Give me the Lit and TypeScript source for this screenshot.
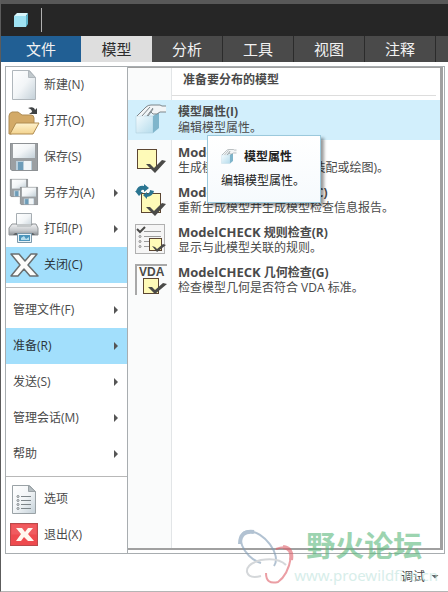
import { LitElement, html, css, svg, nothing, TemplateResult } from "lit";
import { customElement, property } from "lit/decorators.js";
import { classMap } from "lit/directives/class-map.js";

const check = (x: number, y: number) => svg`
  <path d="M${x} ${y + 4} l4 0 4 4 8 -8 4 1 -11 12z" fill="#4a4a48"/>`;

const note = (x: number, y: number, w: number) => svg`
  <rect x=${x} y=${y} width=${w} height=${w} fill="#fefab8" stroke="#5c4632"/>`;

const floppy = svg`
  <path d="M0 0h28v28H2L0 26z" fill="#9b9fa2"/>
  <path d="M3 0h22v15H3z" fill="url(#paper)"/>
  <path d="M6 18h16v10H6z" fill="#b9cedb"/>
  <path d="M8 19h5v8H8z" fill="#6d9cb8"/>
  <path d="M14 18h7v10h-7z" fill="#f1f5f7"/>
  <path d="M.5 .5h27v27H2L.5 26z" fill="none" stroke="#8d9194"/>`;

const paperDefs = svg`
  <defs>
    <linearGradient id="paper" x1="0" y1="0" x2="1" y2="1">
      <stop offset="0" stop-color="#ffffff"/>
      <stop offset="0.5" stop-color="#f2f5f7"/>
      <stop offset="1" stop-color="#c3d0d8"/>
    </linearGradient>
    <linearGradient id="flap" x1="0" y1="0" x2="0" y2="1">
      <stop offset="0" stop-color="#fff3cf"/>
      <stop offset="1" stop-color="#f3d38e"/>
    </linearGradient>
    <linearGradient id="metal" x1="0" y1="0" x2="0" y2="1">
      <stop offset="0" stop-color="#f1f2f3"/>
      <stop offset="0.6" stop-color="#c4c7ca"/>
      <stop offset="1" stop-color="#8b8f93"/>
    </linearGradient>
    <linearGradient id="face" x1="0" y1="0" x2="1" y2="1">
      <stop offset="0" stop-color="#f4fbfe"/>
      <stop offset="1" stop-color="#b5dcec"/>
    </linearGradient>
  </defs>`;

const hand = svg`
  <path d="M1 12l6-4h17v4z" fill="#e6f5fb"/>
  <path d="M1 12h17v17H1z" fill="url(#face)" stroke="#a9cbd9" stroke-width=".5"/>
  <path d="M18 12l6-4v16l-6 5z" fill="#7fb5cb"/>
  <path d="M2 12L11 3q2-2 5-2h9l2 1h4v6h-6l-3 2h-4l-2-2-3 4-2-1 2-4-5 6-2-1 4-5-5 5z" fill="#f3f5f6"/>
  <path d="M2 12L11 3q2-2 5-2h9l2 1h4M31 8h-6l-3 2h-4l-2-2 2-3M15 3l-8 9M18 4l-6 8M16 8l-3 4" fill="none" stroke="#7d868b"/>`;

const icons: Record<string, TemplateResult> = {
  fresh: svg`
    <path d="M4.500 1.500h17l6 7v22h-23z" fill="url(#paper)" stroke="#b0b7bc"/>
    <path d="M20.500 1.500v7h7z" fill="#c1c9cd" stroke="#b0b7bc"/>`,
  open: svg`
    <path d="M1 29V11q0-3 3-4h6l4 3h9q3 0 3 3v6L3 29z" fill="#d3aa68" stroke="#b08d55"/>
    <path d="M2 29l6-11h23l-6 11z" fill="url(#flap)" stroke="#b08c50"/>
    <path d="M20 3q6-2 7 2l2-2v6h-8l3-2q0-3-4-4z" fill="#3f4244"/>`,
  save: svg`<g transform="translate(2 2)">${floppy}</g>`,
  saveAs: svg`
    <g transform="translate(2 2) scale(.64)">${floppy}</g>
    <g transform="translate(12 10) scale(.64)">${floppy}</g>`,
  print: svg`
    <path d="M8.500 .5h15v14h-15z" fill="url(#paper)" stroke="#a6adb2"/>
    <path d="M4 11h5v1h15v-1h4l2 4v7H1v-7z" fill="url(#metal)" stroke="#909497"/>
    <path d="M9 11h14v3H9z" fill="#c4c8ca"/>
    <path d="M7 20h18l2 2H5z" fill="#606467"/>
    <path d="M9.500 20.500h14v9h-14z" fill="#e8f3f8" stroke="#7b98aa"/>
    <path d="M11 22h11v6H11z" fill="#4b94bb"/>
    <path d="M13 25l3-2 2 3 3-2v3h-8z" fill="#b5dceb"/>`,
  close: svg`
    <path d="M3 5h8l6 7 6-7h6l-9 11 10 11h-8l-6-7-6 7H3l9-11z" fill="#fdfdfb" stroke="#6a6f70" stroke-width="1.500" stroke-linejoin="round"/>`,
  options: svg`
    <path d="M4.500 2.500h17l6 6v22h-23z" fill="url(#paper)" stroke="#9aa2a6"/>
    <path d="M20.500 2.500v6h7z" fill="#b5bdc1" stroke="#9aa2a6"/>
    <path d="M13 13.500h10M13 17.500h10M13 21.500h10M13 25.500h10" stroke="#7e868a"/>
    <g fill="#fff" stroke="#7a8286"><circle cx="10" cy="13.500" r="1"/><circle cx="10" cy="17.500" r="1"/><circle cx="10" cy="21.500" r="1"/><circle cx="10" cy="25.500" r="1"/></g>`,
  exit: svg`
    <rect x="2.500" y="4.500" width="27" height="22" fill="#ee4a4e" stroke="#b94a4c"/>
    <rect x="3.500" y="5.500" width="25" height="10" fill="#f1686a" opacity=".6"/>
    <path d="M8 9h6l3 4 3-4h5l-5 6 6 7h-6l-4-4-3 4H8l5-7z" fill="#fff7ef"/>`,
  properties: hand,
  interactive: svg`${note(2.5, 5.5, 19)}${check(11, 16)}`,
  regenerate: svg`
    ${note(6.5, 9.5, 19)}${check(11, 19)}
    <path d="M1 7q2-6 8-5V0l5 4-5 4V6Q6 5 6 8l2 0-4 4-4-5z" fill="#2a7591"/>
    <path d="M8 11l4-3v2q3-1 3-4l4 1q-1 5-7 6v2z" fill="#2a7591"/>`,
  rules: svg`
    <rect x=".5" y=".5" width="29" height="29" fill="#f5f5f5" stroke="#b0b0b0"/>
    <path d="M2 5l3 3 5-5" fill="none" stroke="#4a4a48" stroke-width="2"/>
    <path d="M9 7.500h17M9 12.500h17M9 17.500h5M9 22.500h5" stroke="#9a9a9a"/>
    <g fill="none" stroke="#8a8a8a"><circle cx="5" cy="12.500" r="1"/><circle cx="5" cy="17.500" r="1"/><circle cx="5" cy="22.500" r="1"/></g>
    ${note(14.5, 14.5, 12)}
    <path d="M17 22l3 1 2 2 6-5 3 1-9 7z" fill="#4a4a48"/>`,
  geometry: svg`
    <path d="M0 31V0h32v2H2v29z" fill="#a8a8a8"/>
    <text x="4" y="12" class="vda">VDA</text>
    ${note(8.5, 14.5, 15)}
    <path d="M13 23l4 0 3 3 8-7 4 1-12 10z" fill="#4a4a48"/>`,
};

@customElement("menu-icon")
class MenuIcon extends LitElement {
  @property() name = "";
  static styles = css`
    :host { display: block; flex: none; width: 32px; height: 32px; }
    svg { display: block; width: 100%; height: 100%; }
    .vda { font: bold 12px "Liberation Sans", sans-serif; fill: #4a4a48; }
  `;
  render() {
    return html`<svg viewBox="0 0 32 32" aria-hidden="true">${paperDefs}${icons[this.name] ?? nothing}</svg>`;
  }
}

interface Entry { label: string; icon?: string; more?: boolean; active?: boolean; }
interface Command { icon: string; product?: string; title: string; text: string; active?: boolean; }

const groups: Entry[][] = [
  [
    { label: "新建(N)", icon: "fresh" },
    { label: "打开(O)", icon: "open" },
    { label: "保存(S)", icon: "save" },
    { label: "另存为(A)", icon: "saveAs", more: true },
    { label: "打印(P)", icon: "print", more: true },
    { label: "关闭(C)", icon: "close", active: true },
  ],
  [
    { label: "管理文件(F)", more: true },
    { label: "准备(R)", more: true, active: true },
    { label: "发送(S)", more: true },
    { label: "管理会话(M)", more: true },
    { label: "帮助", more: true },
  ],
  [
    { label: "选项", icon: "options" },
    { label: "退出(X)", icon: "exit" },
  ],
];

const commands: Command[] = [
  { icon: "properties", title: "模型属性(I)", text: "编辑模型属性。", active: true },
  { icon: "interactive", product: "ModelCHECK", title: "交互(I)", text: "生成模型检查报告(零件、装配或绘图)。" },
  { icon: "regenerate", product: "ModelCHECK", title: "重新生成(C)", text: "重新生成模型并生成模型检查信息报告。" },
  { icon: "rules", product: "ModelCHECK", title: "规则检查(R)", text: "显示与此模型关联的规则。" },
  { icon: "geometry", product: "ModelCHECK", title: "几何检查(G)", text: "检查模型几何是否符合 VDA 标准。" },
];

const tabs = ["文件", "模型", "分析", "工具", "视图", "注释"];

@customElement("app-root")
class AppRoot extends LitElement {
  static styles = css`
    :host {
      display: flex; flex-direction: column; box-sizing: border-box; position: relative;
      min-height: 100vh; overflow: hidden; background: #fff; color: #4a4a4a;
      border-left: 1px solid #5c5c5c; border-bottom: 1px solid #b5b5b5;
      font: 12px/16px "Open Sans", "Noto Sans CJK SC", sans-serif;
    }
    * { box-sizing: border-box; }
    button { font: inherit; color: inherit; border: 0; padding: 0; margin: 0; background: none; text-align: left; }
    .title { display: flex; align-items: center; height: 36px; padding-left: 12px; background: #262626; border-top: 4px solid #585858; }
    .title svg { width: 16px; height: 16px; }
    .title i { width: 1px; height: 24px; margin-left: 12px; background: #b0b0b0; }
    .tabs { display: flex; height: 26px; background: #4a4a4a; overflow: hidden; }
    .tab { flex: none; width: 71px; font-size: 15px; line-height: 24px; text-align: center; color: #f2f2f2; border-right: 1px solid #2b2b2b; }
    .tab.file { width: 80px; background: #215f94; border: 0; }
    .tab.current { background: #dedede; color: #2c2c2c; border: 0; }
    .menu { display: flex; margin: 4px 3px 0 4px; border: 1px solid #a8adb0; }
    .side { flex: none; width: 122px; border-right: 1px solid #a8adb0; }
    .group { padding-bottom: 4px; }
    .group + .group { border-top: 1px solid #b8b8b8; padding-top: 4px; }
    .group:last-child { padding: 4px 0 0; }
    .entry { display: flex; align-items: center; width: 100%; height: 36px; padding: 0 9px 0 7px; }
    .entry.pic { padding-left: 2px; gap: 4px; }
    .entry.active { background: #a2dffc; color: #2b353b; }
    .entry span { flex: 1; white-space: nowrap; }
    .more { width: 4px; height: 8px; background: #555; clip-path: polygon(0 0, 100% 50%, 0 100%); }
    .sub { flex: 1; margin: 0 1px 3px 0; border: solid #a0a0a0; border-width: 1px 3px 2px 0; display: flex; flex-direction: column;
      background: linear-gradient(90deg, #fafbfb 43px, #e2e5e7 43px, #e2e5e7 44px, #fff 44px); min-width: 0; }
    .sub h2 { margin: 0 4px 4px 44px; height: 28px; padding: 4px 0 0 11px; font-size: 12px; line-height: 16px; border-bottom: 1px solid #ddd; }
    .command { display: flex; align-items: center; gap: 11px; height: 40px; padding-left: 7px; white-space: nowrap; }
    .command.active { background: #d2effc; }
    .command b, .command .text { display: block; height: 16px; }
    .product { font-size: 13px; }
    .tip { position: absolute; left: 206px; top: 135px; width: 114px; height: 68px; padding: 12px 13px; background: linear-gradient(#fff, #f6fafd);
      border: 1px solid #9cc9dc; box-shadow: 3px 3px 3px #0006; color: #222; }
    .tip div { display: flex; align-items: center; gap: 7px; height: 18px; margin-bottom: 7px; }
    .tip menu-icon { width: 16px; height: 16px; }
    .tip p { margin: 0; white-space: nowrap; }
    .mark { position: absolute; right: 10px; bottom: 4px; display: flex; opacity: .6; pointer-events: none; }
    .mark svg { width: 60px; height: 58px; }
    .mark div { display: flex; flex-direction: column; }
    .mark strong { font-size: 29px; line-height: 34px; color: #5cb87d; padding-left: 12px; }
    .mark small { font: 15px/24px "Noto Sans", sans-serif; color: #bde3dc; }
    .foot { display: flex; flex: 1; align-items: center; justify-content: flex-end; padding: 8px 9px 0 0; }
    .foot button { display: flex; align-items: center; gap: 6px; }
    .foot i { width: 8px; height: 4px; background: #666; clip-path: polygon(0 0, 100% 0, 50% 100%); }
  `;

  render() {
    return html`
      <header class="title">
        <svg viewBox="0 0 16 16" aria-hidden="true">
          <path d="M1 4l3-3h11l-2 3z" fill="#d9f7fd"/><path d="M1 4h12v11H1z" fill="#9fe2f3"/><path d="M13 4l2-3v11l-2 3z" fill="#5fb4cb"/>
        </svg><i></i>
      </header>
      <nav class="tabs">
        ${tabs.map((t, i) => html`<button class=${classMap({ tab: true, file: i === 0, current: i === 1 })}>${t}</button>`)}
      </nav>
      <main class="menu">
        <nav class="side">
          ${groups.map((g) => html`<div class="group">${g.map((e) => html`
            <button class=${classMap({ entry: true, pic: !!e.icon, active: !!e.active })}>
              ${e.icon ? html`<menu-icon name=${e.icon}></menu-icon>` : nothing}
              <span>${e.label}</span>${e.more ? html`<i class="more"></i>` : nothing}
            </button>`)}</div>`)}
        </nav>
        <section class="sub">
          <h2>准备要分布的模型</h2>
          ${commands.map((c) => html`
            <button class=${classMap({ command: true, active: !!c.active })}>
              <menu-icon name=${c.icon}></menu-icon>
              <span><b>${c.product ? html`<span class="product">${c.product}</span> ` : nothing}${c.title}</b><span class="text">${c.text}</span></span>
            </button>`)}
        </section>
      </main>
      <footer class="foot"><button>调试<i></i></button></footer>
      <aside class="mark">
        <svg viewBox="0 0 60 58" fill="none" aria-hidden="true">
          <path d="M40 37C48 26 30 2 14 2C0 4 8 28 27 34" stroke="#7f9bb5" stroke-width="2"/>
          <path d="M6 15Q6 1 20 3" stroke="#7f9bb5" stroke-width="4"/>
          <path d="M42 20Q57 14 57 28Q54 46 44 53Q32 56 32 44" stroke="#df5f69" stroke-width="2"/>
          <path d="M49 18Q59 19 57 31" stroke="#df5f69" stroke-width="4"/>
          <path d="M52 36Q44 28 27 31Q12 35 13 43Q15 50 27 47" stroke="#b9bec2" stroke-width="2"/>
        </svg>
        <div><strong>野火论坛</strong><small>www.proewildfire.cn</small></div>
      </aside>
      <div class="tip" role="tooltip">
        <div><menu-icon name="properties"></menu-icon><b>模型属性</b></div>
        <p>编辑模型属性。</p>
      </div>
    `;
  }
}
